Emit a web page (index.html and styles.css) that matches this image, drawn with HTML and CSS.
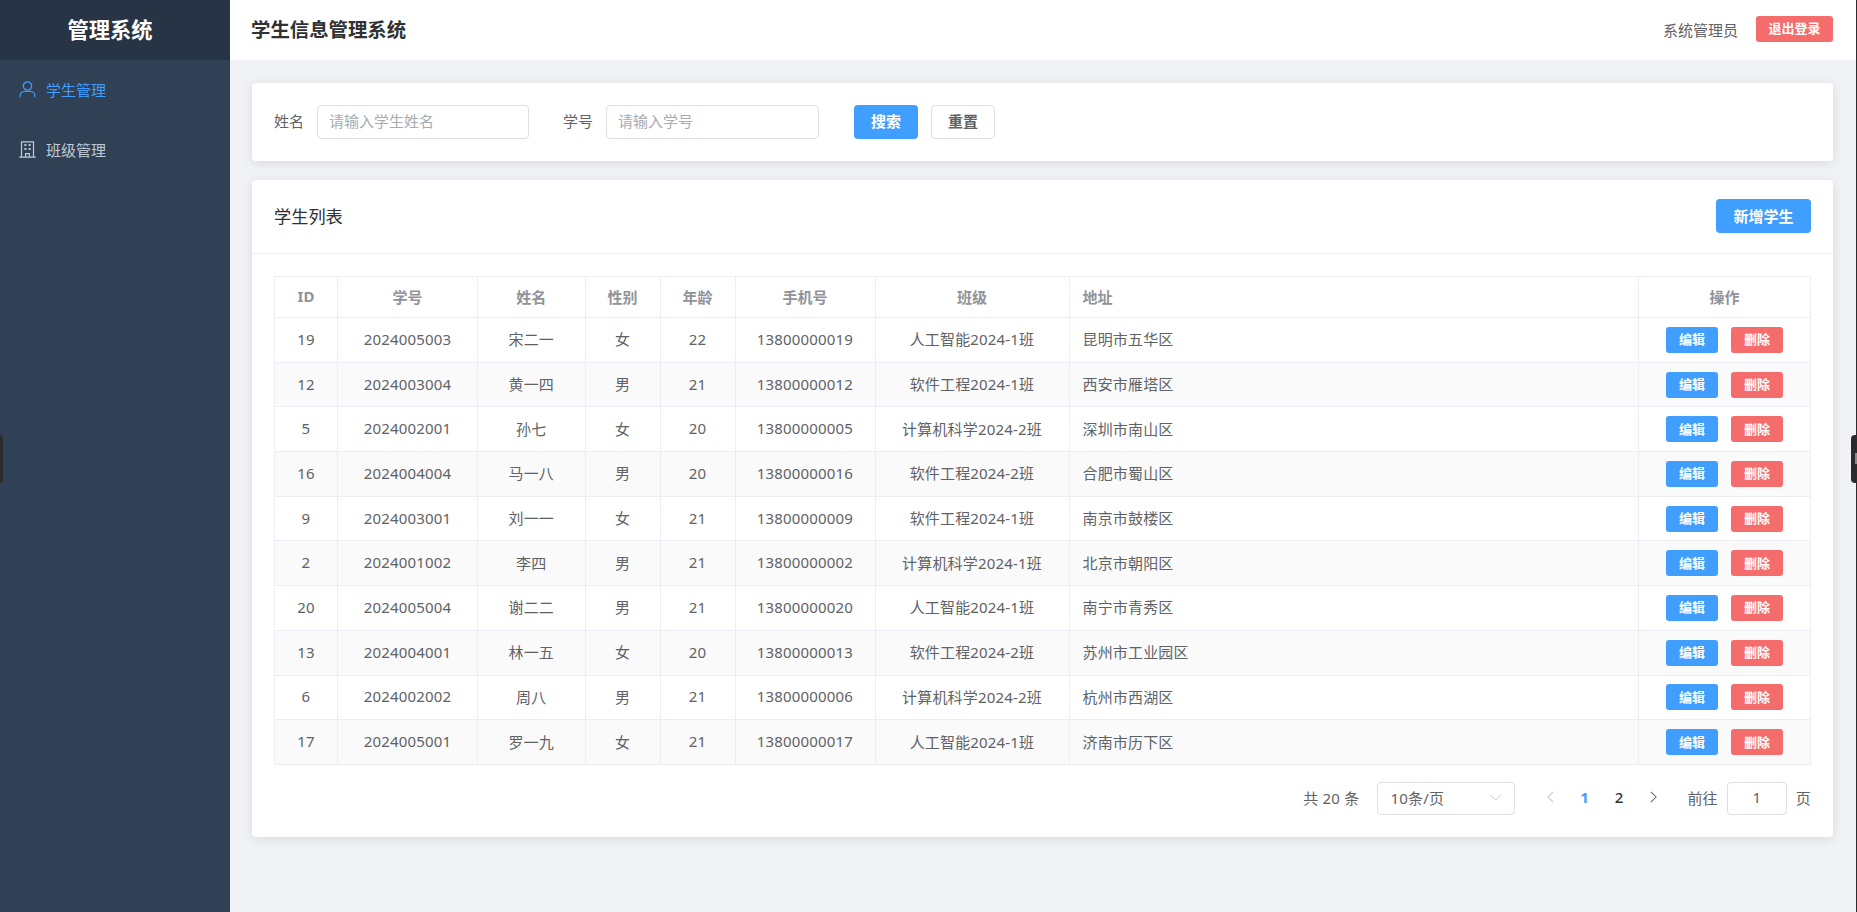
FILE: index.html
```html
<!DOCTYPE html>
<html lang="zh-CN">
<head>
<meta charset="utf-8">
<title>学生信息管理系统</title>
<link rel="stylesheet" href="styles.css">
</head>
<body>
<div class="app">
  <aside class="sidebar">
    <div class="logo">管理系统</div>
    <nav class="menu">
      <a class="menu-item active">
        <svg class="menu-icon" viewBox="0 0 17 17" fill="none" stroke="currentColor" stroke-width="1.2"><circle cx="8.5" cy="5" r="4.2"/><path d="M1.2 16.2v-1.7a4 4 0 0 1 4-4h6.6a4 4 0 0 1 4 4v1.7"/></svg>
        <span>学生管理</span>
      </a>
      <a class="menu-item">
        <svg class="menu-icon" viewBox="0 0 17 17" fill="none" stroke="currentColor" stroke-width="1.2"><path d="M2.5 16V.8h12V16M.3 16.2h16.4M6.6 16v-3.4h3.8V16"/><path d="M5.4 4h2M9.6 4h2M5.4 8h2M9.6 8h2" stroke-width="2"/></svg>
        <span>班级管理</span>
      </a>
    </nav>
  </aside>
  <div class="content">
    <header class="topbar">
      <h1 class="page-title">学生信息管理系统</h1>
      <div class="user-box">
        <span class="user-name">系统管理员</span>
        <button class="btn-small danger logout">退出登录</button>
      </div>
    </header>
    <main class="main">
      <section class="card search-card">
        <label class="field-label">姓名</label>
        <div class="text-input name-input">请输入学生姓名</div>
        <label class="field-label second">学号</label>
        <div class="text-input no-input">请输入学号</div>
        <button class="btn primary search-btn">搜索</button>
        <button class="btn plain reset-btn">重置</button>
      </section>
      <section class="card list-card">
        <div class="list-head">
          <h2 class="list-title">学生列表</h2>
          <button class="btn primary add-btn">新增学生</button>
        </div>
        <div class="list-body">
          <table class="grid">
            <colgroup>
              <col class="c-id"><col class="c-no"><col class="c-name"><col class="c-sex"><col class="c-age"><col class="c-tel"><col class="c-class"><col class="c-addr"><col class="c-op">
            </colgroup>
            <thead>
              <tr><th>ID</th><th>学号</th><th>姓名</th><th>性别</th><th>年龄</th><th>手机号</th><th>班级</th><th class="left">地址</th><th>操作</th></tr>
            </thead>
            <tbody>
              <tr><td>19</td><td>2024005003</td><td>宋二一</td><td>女</td><td>22</td><td>13800000019</td><td>人工智能2024-1班</td><td class="left">昆明市五华区</td><td class="op-cell"><div class="ops"><button class="btn-small primary">编辑</button><button class="btn-small danger">删除</button></div></td></tr>
              <tr><td>12</td><td>2024003004</td><td>黄一四</td><td>男</td><td>21</td><td>13800000012</td><td>软件工程2024-1班</td><td class="left">西安市雁塔区</td><td class="op-cell"><div class="ops"><button class="btn-small primary">编辑</button><button class="btn-small danger">删除</button></div></td></tr>
              <tr><td>5</td><td>2024002001</td><td>孙七</td><td>女</td><td>20</td><td>13800000005</td><td>计算机科学2024-2班</td><td class="left">深圳市南山区</td><td class="op-cell"><div class="ops"><button class="btn-small primary">编辑</button><button class="btn-small danger">删除</button></div></td></tr>
              <tr><td>16</td><td>2024004004</td><td>马一八</td><td>男</td><td>20</td><td>13800000016</td><td>软件工程2024-2班</td><td class="left">合肥市蜀山区</td><td class="op-cell"><div class="ops"><button class="btn-small primary">编辑</button><button class="btn-small danger">删除</button></div></td></tr>
              <tr><td>9</td><td>2024003001</td><td>刘一一</td><td>女</td><td>21</td><td>13800000009</td><td>软件工程2024-1班</td><td class="left">南京市鼓楼区</td><td class="op-cell"><div class="ops"><button class="btn-small primary">编辑</button><button class="btn-small danger">删除</button></div></td></tr>
              <tr><td>2</td><td>2024001002</td><td>李四</td><td>男</td><td>21</td><td>13800000002</td><td>计算机科学2024-1班</td><td class="left">北京市朝阳区</td><td class="op-cell"><div class="ops"><button class="btn-small primary">编辑</button><button class="btn-small danger">删除</button></div></td></tr>
              <tr><td>20</td><td>2024005004</td><td>谢二二</td><td>男</td><td>21</td><td>13800000020</td><td>人工智能2024-1班</td><td class="left">南宁市青秀区</td><td class="op-cell"><div class="ops"><button class="btn-small primary">编辑</button><button class="btn-small danger">删除</button></div></td></tr>
              <tr><td>13</td><td>2024004001</td><td>林一五</td><td>女</td><td>20</td><td>13800000013</td><td>软件工程2024-2班</td><td class="left">苏州市工业园区</td><td class="op-cell"><div class="ops"><button class="btn-small primary">编辑</button><button class="btn-small danger">删除</button></div></td></tr>
              <tr><td>6</td><td>2024002002</td><td>周八</td><td>男</td><td>21</td><td>13800000006</td><td>计算机科学2024-2班</td><td class="left">杭州市西湖区</td><td class="op-cell"><div class="ops"><button class="btn-small primary">编辑</button><button class="btn-small danger">删除</button></div></td></tr>
              <tr><td>17</td><td>2024005001</td><td>罗一九</td><td>女</td><td>21</td><td>13800000017</td><td>人工智能2024-1班</td><td class="left">济南市历下区</td><td class="op-cell"><div class="ops"><button class="btn-small primary">编辑</button><button class="btn-small danger">删除</button></div></td></tr>
            </tbody>
          </table>
          <div class="pager">
            <span class="pager-total">共 20 条</span>
            <div class="pager-select">
              <span>10条/页</span>
              <svg class="chev-down" viewBox="0 0 14 8" fill="none" stroke="currentColor" stroke-width="1.1"><path d="M1 1l6 6 6-6"/></svg>
            </div>
            <div class="pager-nums">
              <span class="pager-num"><svg class="chev prev" viewBox="0 0 8 14" fill="none" stroke="currentColor" stroke-width="1.2"><path d="M7 1L1 7l6 6"/></svg></span>
              <span class="pager-num current">1</span>
              <span class="pager-num">2</span>
              <span class="pager-num"><svg class="chev next" viewBox="0 0 8 14" fill="none" stroke="currentColor" stroke-width="1.2"><path d="M1 1l6 6-6 6"/></svg></span>
            </div>
            <span class="pager-goto">前往</span>
            <div class="pager-input">1</div>
            <span class="pager-unit">页</span>
          </div>
        </div>
      </section>
    </main>
  </div>
</div>
<div class="edge-tab edge-left"></div>
<div class="edge-tab edge-right"><span class="edge-grip"></span></div>
</body>
</html>
```
FILE: styles.css
```css
* { box-sizing: border-box; }
html, body { margin: 0; height: 100%; overflow: hidden; }
body {
  font-family: "Noto Sans", "Noto Sans CJK SC", sans-serif;
  font-size: 15px;
  color: #606266;
  background: #f0f2f5;
}
button { font-family: inherit; border: 0; padding: 0 0 2px; cursor: pointer; }
h1, h2 { margin: 0; }

.app { display: flex; height: 912px; border-right: 1px solid #2a2d30; }

.sidebar { width: 230px; flex: none; background: #304156; }
.logo {
  height: 60px;
  padding: 0 10px 3px 0;
  background: #263445;
  color: #fff;
  font-size: 21.3px;
  font-weight: 700;
  display: flex;
  align-items: center;
  justify-content: center;
}
.menu-item {
  height: 60px;
  display: flex;
  align-items: center;
  padding: 0 0 2px 19px;
  gap: 10px;
  color: #bfcbd9;
  font-size: 15px;
}
.menu-item.active { color: #409eff; }
.menu-icon { width: 17px; height: 17px; flex: none; }

.content { flex: 1; min-width: 0; display: flex; flex-direction: column; }
.topbar {
  height: 60px;
  flex: none;
  background: #fff;
  display: flex;
  align-items: center;
  justify-content: space-between;
  padding: 0 23px 3px 21px;
}
.page-title { font-size: 19.4px; font-weight: 700; color: #303133; }
.user-box { display: flex; align-items: center; gap: 18px; }
.user-name { color: #606266; font-size: 15px; padding-top: 2px; }

.main { flex: 1; display: flex; flex-direction: column; gap: 19px; padding: 23px 23px 0 22px; }
.card { background: #fff; border-radius: 4px; box-shadow: 0 2px 12px rgba(0, 0, 0, .1); }

.search-card { height: 78px; display: flex; align-items: center; padding: 0 22px 1px; }
.field-label { color: #606266; font-size: 15px; width: 30px; flex: none; padding-bottom: 2px; }
.field-label.second { margin-left: 34px; }
.text-input {
  height: 34px;
  margin-left: 13px;
  padding: 0 0 2px 11px;
  display: flex;
  align-items: center;
  color: #a8abb2;
  font-size: 15px;
  border: 1px solid #dcdfe6;
  border-radius: 4px;
  background: #fff;
}
.name-input { width: 212px; }
.no-input { width: 213px; }
.btn {
  height: 34px;
  border-radius: 4px;
  font-size: 15px;
  font-weight: 700;
}
.primary { background: #409eff; color: #fff; }
.danger { background: #f56c6c; color: #fff; }
.plain { background: #fff; color: #606266; border: 1px solid #dcdfe6; }
.search-btn { width: 64px; margin-left: 35px; }
.reset-btn { width: 64px; margin-left: 13px; }
.add-btn { width: 95px; }

.btn-small {
  width: 52px;
  height: 26px;
  border-radius: 3px;
  font-size: 13px;
  font-weight: 700;
}
.logout { width: 77px; }

.list-head {
  height: 74px;
  padding: 0 22px 1px;
  display: flex;
  align-items: center;
  justify-content: space-between;
  border-bottom: 1px solid #ebeef5;
}
.list-title { font-size: 17.2px; font-weight: 400; color: #303133; padding-bottom: 2px; }
.list-body { padding: 22px; }

.grid {
  width: 1536px;
  table-layout: fixed;
  border-collapse: collapse;
  border: 1px solid #ebeef5;
}
.c-id { width: 63px; }
.c-no { width: 140px; }
.c-name { width: 107.5px; }
.c-sex { width: 75px; }
.c-age { width: 75px; }
.c-tel { width: 140px; }
.c-class { width: 194px; }
.c-addr { width: 569.5px; }
.c-op { width: 172px; }
.grid th, .grid td {
  border: 1px solid #ebeef5;
  text-align: center;
  padding: 0 0 2px;
  font-size: 15px;
}
.grid th { height: 41px; color: #909399; font-weight: 700; }
.grid td { height: 44.7px; color: #606266; letter-spacing: .17px; }
.grid td.op-cell { padding: 0; letter-spacing: 0; }
.grid th.left, .grid td.left { text-align: left; padding-left: 13px; }
.grid tbody tr:nth-child(even) td { background: #fafafa; }
.ops { display: flex; justify-content: center; gap: 13px; }

.pager { display: flex; align-items: center; justify-content: flex-end; height: 33px; margin-top: 17px; font-size: 15px; color: #606266; letter-spacing: .2px; }
.pager-total, .pager-goto, .pager-unit { padding-bottom: 2px; }
.pager-select {
  width: 138px;
  height: 33px;
  margin-left: 18px;
  padding: 0 12px 2px;
  display: flex;
  align-items: center;
  justify-content: space-between;
  border: 1px solid #dcdfe6;
  border-radius: 4px;
}
.chev-down { width: 13px; height: 7px; color: #c0c4cc; }
.pager-nums { display: flex; margin-left: 17.5px; margin-right: 16.5px; }
.pager-num { width: 34.5px; padding-bottom: 2px; font-weight: 500; color: #303133; display: flex; align-items: center; justify-content: center; }
.pager-num.current { color: #409eff; font-weight: 700; }
.chev { width: 7px; height: 12px; }
.chev.prev { color: #c0c4cc; }
.chev.next { color: #606266; }
.pager-input {
  width: 60px;
  height: 33px;
  margin: 0 9px;
  padding-bottom: 2px;
  display: flex;
  align-items: center;
  justify-content: center;
  border: 1px solid #dcdfe6;
  border-radius: 4px;
}

.edge-tab { position: fixed; top: 435px; height: 48px; background: #2b2b2b; }
.edge-left { left: 0; width: 3px; border-radius: 0 4px 4px 0; }
.edge-right { right: 0; width: 6px; border-radius: 4px 0 0 4px; }
.edge-grip { position: absolute; right: 0; top: 18px; width: 2px; height: 11px; background: #8a8a8a; }
```
